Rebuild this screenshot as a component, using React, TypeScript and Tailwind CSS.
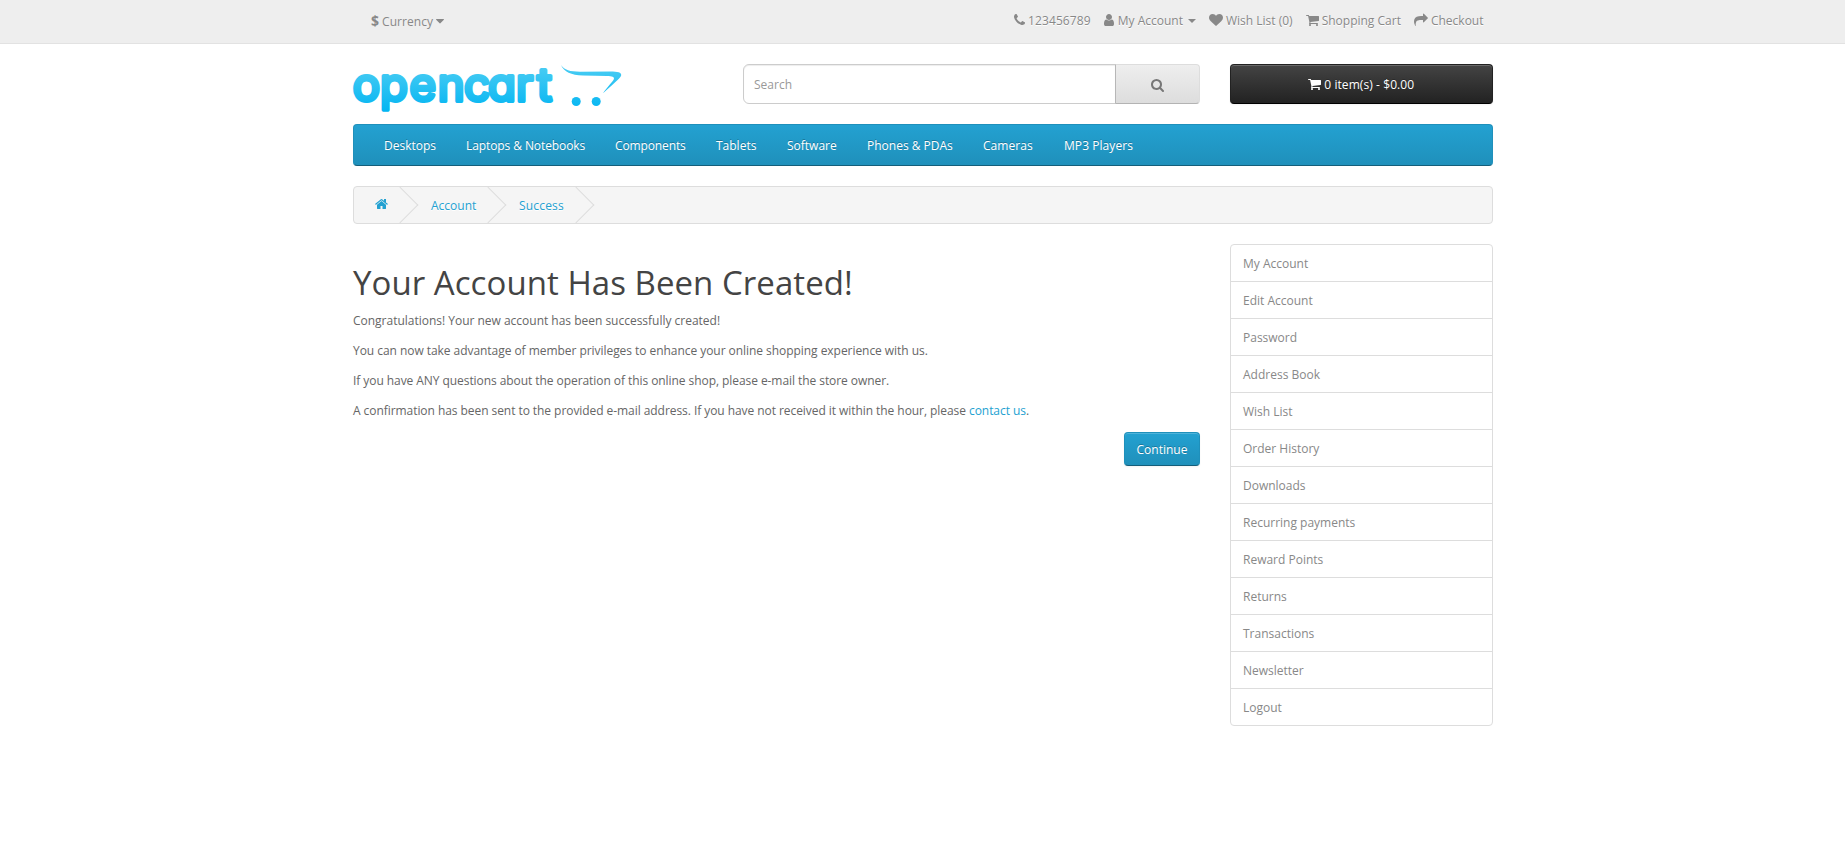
import React from "react";

type IconProps = { path: string; x: number; w: number; className?: string };

/* Icons share a 1792-unit em; x and w give each glyph its own advance width at 14px. */
function Icon({ path, x, w, className = "" }: IconProps) {
  return (
    <svg
      viewBox={`${x} 0 ${w} 1792`}
      width={(w / 1792) * 14}
      height={14}
      fill="currentColor"
      className={`inline-block shrink-0 ${className}`}
      aria-hidden="true"
    >
      <path d={path} />
    </svg>
  );
}

const CART =
  "M704 1536q0 52-38 90t-90 38-90-38-38-90 38-90 90-38 90 38 38 90zm896 0q0 52-38 90t-90 38-90-38-38-90 38-90 90-38 90 38 38 90zm128-1088v512q0 24-16.5 42.5t-40.5 21.5l-1044 122q13 60 13 70 0 16-24 64h920q26 0 45 19t19 45-19 45-45 19h-1024q-26 0-45-19t-19-45q0-11 8-31.5t16-36 21.5-40 15.5-29.5l-177-823h-204q-26 0-45-19t-19-45 19-45 45-19h256q16 0 28.5 6.5t19.5 15.5 13 24.5 8 26 5.5 29.5 4.5 26h1201q26 0 45 19t19 45z";
const PHONE =
  "M1600 1240q0 27-10 70.5t-21 68.5q-21 50-122 106-94 51-186 51-27 0-53-3.5t-57.5-12.5-47-14.5-55.5-20.5-49-18q-98-35-175-83-127-79-264-216t-216-264q-48-77-83-175-3-9-18-49t-20.5-55.5-14.5-47-12.5-57.5-3.5-53q0-92 51-186 56-101 106-122 25-11 68.5-21t70.5-10q14 0 21 3 18 6 53 76 11 19 30 54t35 63.5 31 53.5q3 4 17.5 25t21.5 35.5 7 28.5q0 20-28.5 50t-62 55-62 53-28.5 46q0 9 5 22.5t8.5 20.5 14 24 11.5 19q76 137 174 235t235 174q2 1 19 11.5t24 14 20.5 8.5 22.5 5q18 0 46-28.5t53-62 55-62 50-28.5q14 0 28.5 7t35.5 21.5 25 17.5q25 15 53.5 31t63.5 35 54 30q70 35 76 53 3 7 3 21z";
const USER =
  "M1536 1399q0 109-62.5 187t-150.5 78h-854q-88 0-150.5-78t-62.5-187q0-85 8.5-160.5t31.5-152 58.5-131 94-89 134.5-34.5q131 128 313 128t313-128q76 0 134.5 34.5t94 89 58.5 131 31.5 152 8.5 160.5zm-256-887q0 159-112.5 271.5t-271.5 112.5-271.5-112.5-112.5-271.5 112.5-271.5 271.5-112.5 271.5 112.5 112.5 271.5z";
const HEART =
  "M896 1664q-26 0-44-18l-624-602q-10-8-27.5-26t-55.5-65.5-68-97.5-53.5-121-23.5-138q0-220 127-344t351-124q62 0 126.5 21.5t120 58 95.5 68.5 76 68q36-36 76-68t95.5-68.5 120-58 126.5-21.5q224 0 351 124t127 344q0 221-229 450l-623 600q-18 18-44 18z";
const SHARE =
  "M1792 640q0 26-19 45l-512 512q-19 19-45 19t-45-19-19-45v-256h-224q-98 0-175.5 6t-154 21.5-133 42.5-105.5 69.5-80 101-48.5 138.5-17.5 181q0 55 5 123 0 6 2.5 23.5t2.5 26.5q0 15-8.5 25t-23.5 10q-16 0-28-17-7-9-13-22t-13.5-30-10.5-24q-127-285-127-451 0-199 53-333 162-403 875-403h224v-256q0-26 19-45t45-19 45 19l512 512q19 19 19 45z";
const SEARCH =
  "M1216 832q0-185-131.5-316.5t-316.5-131.5-316.5 131.5-131.5 316.5 131.5 316.5 316.5 131.5 316.5-131.5 131.5-316.5zm512 832q0 52-38 90t-90 38q-54 0-90-38l-343-342q-179 124-399 124-143 0-273.5-55.5t-225-150-150-225-55.5-273.5 55.5-273.5 150-225 225-150 273.5-55.5 273.5 55.5 225 150 150 225 55.5 273.5q0 220-124 399l343 343q37 37 37 90z";
const HOME =
  "M1472 992v480q0 26-19 45t-45 19h-384v-384h-256v384h-384q-26 0-45-19t-19-45v-480q0-1 .5-3t.5-3l575-474 575 474q1 2 1 6zm223-69l-62 74q-8 9-21 11h-3q-13 0-21-7l-692-577-692 577q-12 8-24 7-13-2-21-11l-62-74q-8-10-7-23.5t11-21.5l719-599q32-26 76-26t76 26l244 204v-195q0-14 9-23t23-9h192q14 0 23 9t9 23v408l219 182q10 8 11 21.5t-7 23.5z";
const CARET =
  "M1408 704q0 26-19 45l-448 448q-19 19-45 19t-45-19l-448-448q-19-19-19-45t19-45 45-19h896q26 0 45 19t19 45z";

function TopBar() {
  return (
    <nav className="h-[44px] border-b border-[#e2e2e2] bg-[#eeeeee] text-[#888888] [text-shadow:0_1px_0_#fff]">
      <div className="mx-auto flex w-[1170px] justify-between px-[15px]">
        <button className="ml-[18.5px] mt-3 flex h-5 items-center leading-5">
          <strong className="-mt-[2px] text-[14px] font-bold">$</strong>
          <span className="ml-[3px] tracking-[0.06px]">Currency</span>
          <Icon path={CARET} x={384} w={1024} className="-mt-[2px] ml-[3px]" />
        </button>
        <ul className="mr-[9px] mt-[11px] flex h-5 items-center gap-[13px] leading-5">
          <li className="flex items-center gap-[3px]">
            <Icon path={PHONE} x={192} w={1408} className="-mt-[2px]" />
            <span className="tracking-[0.11px]">123456789</span>
          </li>
          <li className="flex items-center gap-1">
            <Icon path={USER} x={256} w={1280} className="-mt-[2px]" />
            <span>My Account</span>
            <span className="ml-px border-x-4 border-t-4 border-x-transparent border-t-[#888888]" />
          </li>
          <li className="flex items-center gap-[3px]">
            <Icon path={HEART} x={0} w={1792} className="-mt-[2px]" />
            <span>Wish List (0)</span>
          </li>
          <li className="flex items-center gap-[3px]">
            <Icon path={CART} x={64} w={1664} className="-mt-[2px]" />
            <span>Shopping Cart</span>
          </li>
          <li className="flex items-center gap-[3px]">
            <Icon path={SHARE} x={0} w={1792} className="-mt-[2px]" />
            <span>Checkout</span>
          </li>
        </ul>
      </div>
    </nav>
  );
}

function Logo() {
  return (
    <svg
      viewBox="353 64 270 50"
      width={270}
      height={50}
      className="block overflow-visible"
      role="img"
      aria-label="opencart"
    >
      <defs>
        <linearGradient id="logo-fill" gradientUnits="userSpaceOnUse" x1="0" y1="65" x2="0" y2="113">
          <stop offset="0" stopColor="#4ccdf3" />
          <stop offset="1" stopColor="#00b4f2" />
        </linearGradient>
      </defs>
      <text
        x="352.8 380 409.5 437.8 464 488 516 537"
        y="100.8"
        fill="url(#logo-fill)"
        stroke="url(#logo-fill)"
        strokeWidth="4"
        strokeLinejoin="round"
        className="font-['Inter',sans-serif] text-[45.5px] font-normal [font-feature-settings:'cv11'_1]"
      >
        opencart
      </text>
      <g fill="url(#logo-fill)">
        <path d="M561 65 C564.5 70 570 71.7 580 71.7 L610 71.5 C618 71.6 621.500 72.500 621.200 75.200 C620.800 78 613 84 603 93.300 C607 87.500 612.500 82 613.800 79.300 C614.800 77 612 76.200 607 76 L583 75.600 C571 75 564 72 561 65Z" />
        <circle cx="576.2" cy="101.500" r="4.500" />
        <circle cx="596.2" cy="101.500" r="4.500" />
      </g>
    </svg>
  );
}

function Header() {
  return (
    <header className="mx-auto mt-5 flex h-[60px] w-[1170px] px-[15px]">
      <div className="w-[390px]">
        <Logo />
      </div>
      <div className="flex h-10 w-[457.5px]">
        <input
          type="text"
          placeholder="Search"
          className="h-10 min-w-0 flex-1 rounded-l-[6px] border border-[#cccccc] bg-white pl-[10.5px] pr-[10px] text-[12px] leading-5 shadow-[inset_0_1px_1px_rgba(0,0,0,0.075)] outline-none placeholder:text-[#999999]"
        />
        <button className="-ml-px flex h-10 w-[85px] items-center justify-center rounded-r-[4px] border border-t-[#dddddd] border-r-[#dddddd] border-b-[#b3b3b3] border-l-[#b7b7b7] bg-linear-to-b from-[#eeeeee] to-[#dddddd] text-[#777777]">
          <Icon path={SEARCH} x={64} w={1664} className="mt-[2px]" />
        </button>
      </div>
      <button className="ml-[30px] flex h-10 w-[262.5px] items-center justify-center rounded-[4px] border border-[#222222] border-b-black bg-linear-to-b from-[#444444] to-[#222222] pt-px leading-5 text-white shadow-[inset_0_1px_0_rgba(255,255,255,0.2),0_1px_2px_rgba(0,0,0,0.05)] [text-shadow:0_-1px_0_rgba(0,0,0,0.25)]">
        <Icon path={CART} x={64} w={1664} className="-mt-px" />
        <span className="ml-[3px] tracking-[0.08px]">0 item(s) - $0.00</span>
      </button>
    </header>
  );
}

const CATEGORIES = [
  { name: "Desktops", className: "w-[82px]" },
  { name: "Laptops & Notebooks", className: "w-[149px] tracking-[-0.09px]" },
  { name: "Components", className: "w-[101px] tracking-[-0.12px]" },
  { name: "Tablets", className: "w-[71px]" },
  { name: "Software", className: "w-[80px]" },
  { name: "Phones & PDAs", className: "w-[116px]" },
  { name: "Cameras", className: "w-[81px] tracking-[0.06px]" },
  { name: "MP3 Players", className: "w-[99px] tracking-[0.06px]" },
];

const ACCOUNT_LINKS = [
  "My Account",
  "Edit Account",
  "Password",
  "Address Book",
  "Wish List",
  "Order History",
  "Downloads",
  "Recurring payments",
  "Reward Points",
  "Returns",
  "Transactions",
  "Newsletter",
  "Logout",
];

function Crumb({ className, children }: { className: string; children: React.ReactNode }) {
  return (
    <li className={`relative pl-[20.5px] leading-5 [text-shadow:0_1px_0_#fff] ${className}`}>
      <a href="#" className="block h-5 pt-px">{children}</a>
      <span className="absolute -right-[5px] -top-[3px] size-[26px] -rotate-45 border-b border-r border-[#dddddd]" />
    </li>
  );
}

export default function App() {
  return (
    <div className="min-h-[850px] bg-white font-['Open_Sans',sans-serif] text-[12px] leading-5 text-[#666666]">
      <TopBar />
      <Header />
      <div className="mx-auto w-[1170px] px-[15px]">
        <nav className="h-[42px] rounded-[4px] border border-[#1f90bb] border-b-[#145e7a] bg-linear-to-b from-[#23a1d1] to-[#1f90bb] pl-[15.5px] pr-[15px]">
          <ul className="flex">
            {CATEGORIES.map(({ name, className }) => (
              <li key={name} className={className}>
                <a
                  href="#"
                  className="block whitespace-nowrap pb-[9px] pl-[15px] pt-[11px] leading-5 text-white [text-shadow:0_-1px_0_rgba(0,0,0,0.25)]"
                >
                  {name}
                </a>
              </li>
            ))}
          </ul>
        </nav>
        <ul className="mt-5 flex h-[38px] gap-[3px] overflow-hidden rounded-[4px] border border-[#dddddd] bg-[#f5f5f5] py-2 text-[#23a1d1]">
          <Crumb className="w-[54px]">
            <Icon path={HOME} x={64} w={1664} className="ml-[0.5px] mt-px align-top" />
          </Crumb>
          <Crumb className="w-[85px]">Account</Crumb>
          <Crumb className="w-[85px] tracking-[0.18px]">Success</Crumb>
        </ul>
        <div className="mt-5 flex justify-between">
          <main className="w-[847.5px] pl-[0.5px]">
            <h1 className="mb-[10px] mt-[21px] text-[33px] leading-[1.1] tracking-[0.05px] text-[#444444]">
              Your Account Has Been Created!
            </h1>
            <p className="mb-[10px] tracking-[-0.012px]">
              Congratulations! Your new account has been successfully created!
            </p>
            <p className="mb-[10px] tracking-[-0.048px]">
              You can now take advantage of member privileges to enhance your online shopping experience with us.
            </p>
            <p className="mb-[10px] tracking-[-0.065px]">
              If you have ANY questions about the operation of this online shop, please e-mail the store owner.
            </p>
            <p className="mb-[11px] tracking-[-0.06px]">
              A confirmation has been sent to the provided e-mail address. If you have not received it within the hour,
              please{" "}
              <a href="#" className="text-[#23a1d1]">
                contact us
              </a>
              .
            </p>
            <div className="flex justify-end">
              <a
                href="#"
                className="h-[34px] w-[76px] rounded-[4px] border border-[#1f90bb] border-b-[#145e7a] bg-linear-to-b from-[#23a1d1] to-[#1f90bb] py-[6.5px] text-center leading-5 text-white shadow-[inset_0_1px_0_rgba(255,255,255,0.2),0_1px_2px_rgba(0,0,0,0.05)] [text-shadow:0_-1px_0_rgba(0,0,0,0.25)]"
              >
                Continue
              </a>
            </div>
          </main>
          <aside className="w-[262.5px]">
            <ul className="divide-y divide-[#dddddd] rounded-[4px] border border-[#dddddd] text-[#888888]">
              {ACCOUNT_LINKS.map((name) => (
                <li key={name}>
                  <a href="#" className="block px-3 pb-[7px] pt-[9px]">
                    {name}
                  </a>
                </li>
              ))}
            </ul>
          </aside>
        </div>
      </div>
    </div>
  );
}
